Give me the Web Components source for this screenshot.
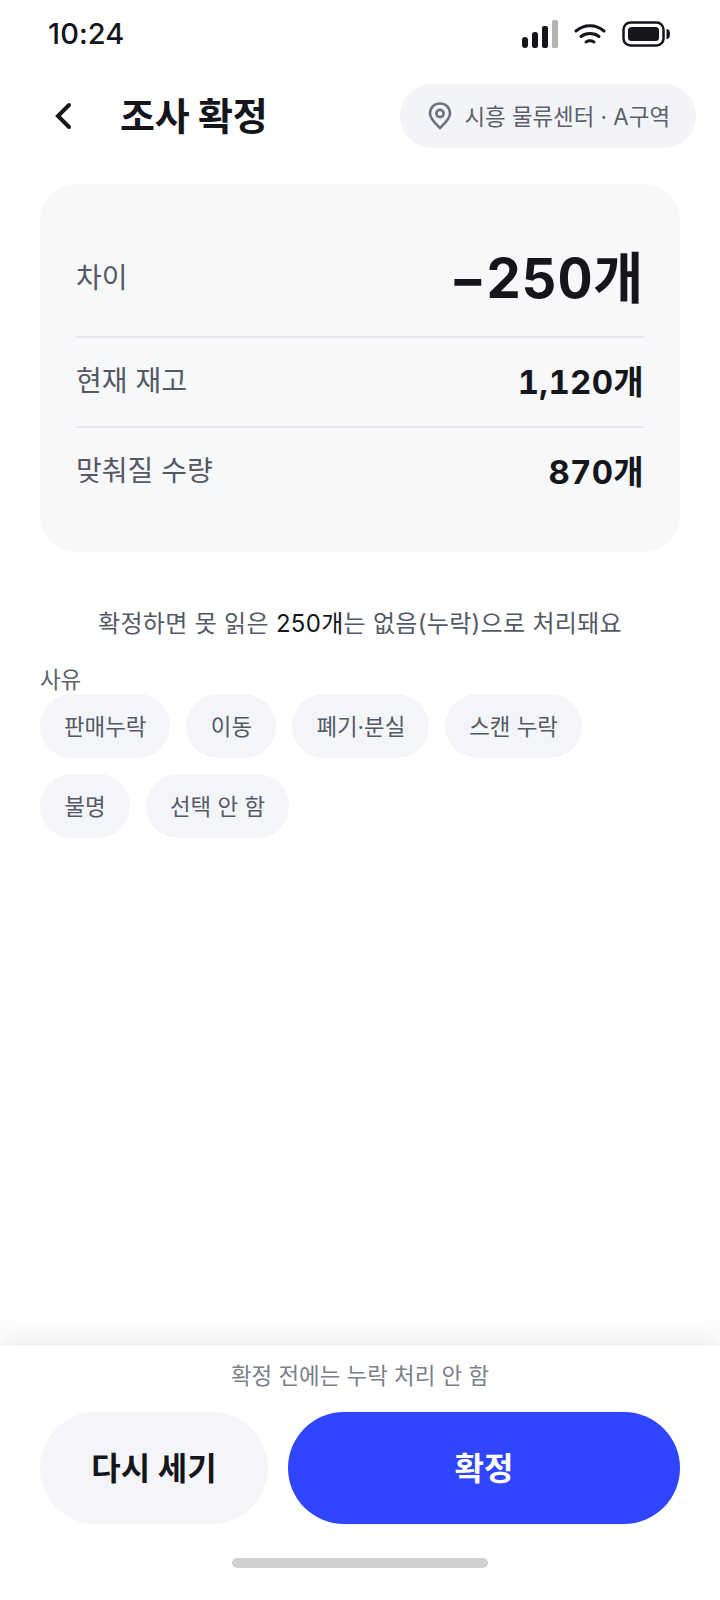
<!DOCTYPE html>
<html lang="ko">
<head>
<meta charset="utf-8">
<title>조사 확정</title>
<style>
  html, body { margin: 0; background: #fff; }
  body { font-family: Inter, "Noto Sans CJK KR", sans-serif; color: #14161c; }
</style>
</head>
<body>
<confirm-screen>
  <status-bar></status-bar>
  <top-bar title="조사 확정" place="시흥 물류센터 · A구역"></top-bar>
  <summary-card>
    <summary-row label="차이" value="−250개" big></summary-row>
    <summary-row label="현재 재고" value="1,120개"></summary-row>
    <summary-row label="맞춰질 수량" value="870개" last></summary-row>
  </summary-card>
  <p-note>확정하면 못 읽은 <b>250개</b>는 없음(누락)으로 처리돼요</p-note>
  <reason-chips label="사유">
    <reason-chip>판매누락</reason-chip>
    <reason-chip>이동</reason-chip>
    <reason-chip>폐기·분실</reason-chip>
    <reason-chip>스캔 누락</reason-chip>
    <reason-chip>불명</reason-chip>
    <reason-chip>선택 안 함</reason-chip>
  </reason-chips>
  <action-footer slot="footer" hint="확정 전에는 누락 처리 안 함" secondary="다시 세기" primary="확정"></action-footer>
</confirm-screen>

<script>
class ConfirmScreen extends HTMLElement {
  constructor() {
    super();
    this.attachShadow({ mode: "open" });
    this.shadowRoot.innerHTML = `
      <style>
        :host { display: flex; flex-direction: column; width: 720px; height: 1600px; overflow: hidden; background: #fff; }
        .body { flex: 1; display: flex; flex-direction: column; min-height: 0; }
      </style>
      <div class="body"><slot></slot></div>
      <slot name="footer"></slot>
    `;
  }
}

class StatusBar extends HTMLElement {
  constructor() {
    super();
    this.attachShadow({ mode: "open" });
    this.shadowRoot.innerHTML = `
      <style>
        :host { display: flex; align-items: center; justify-content: space-between; height: 68px; padding: 0 50px 0 48px; box-sizing: border-box; }
        .time { font-size: 29px; font-weight: 500; letter-spacing: .1px; color: #14161c; padding-bottom: 2px; }
        .icons { display: flex; align-items: center; gap: 16px; }
        svg { display: block; }
      </style>
      <span class="time">10:24</span>
      <div class="icons">
        <svg width="36" height="28" viewBox="0 0 36 28">
          <rect x="0" y="17" width="6" height="11" rx="3" fill="#14161c"/>
          <rect x="10" y="12" width="6" height="16" rx="2.5" fill="#14161c"/>
          <rect x="20" y="6" width="6" height="22" rx="2" fill="#14161c"/>
          <rect x="30" y="0" width="6" height="28" rx="1.5" fill="#b4b4b6"/>
        </svg>
        <svg width="32" height="22" viewBox="0 0 32 22" fill="none" stroke="#14161c" stroke-width="3" stroke-linecap="round">
          <path d="M2 8 C10 1 22 1 30 8"/>
          <path d="M7 13.5 C12 9.5 20 9.5 25 13.5"/>
          <path d="M12 19 C14.5 17.5 17.500 17.500 20 19"/>
        </svg>
        <svg width="48" height="26" viewBox="0 0 48 26">
          <rect x="1.500" y="1.500" width="40" height="23" rx="7" fill="none" stroke="#14161c" stroke-width="2.500"/>
          <rect x="6" y="6" width="31" height="14" rx="3.500" fill="#14161c"/>
          <path d="M44.500 8 C47 8 48 10 48 13 C48 16 47 18 44.500 18 Z" fill="#14161c"/>
        </svg>
      </div>
    `;
  }
}

class TopBar extends HTMLElement {
  constructor() {
    super();
    this.attachShadow({ mode: "open" });
  }

  connectedCallback() {
    const title = this.getAttribute("title");
    const place = this.getAttribute("place");
    this.shadowRoot.innerHTML = `
      <style>
        :host { display: flex; align-items: center; height: 64px; margin-top: 16px; padding: 0 24px 0 40px; }
        .back { width: 48px; height: 48px; display: flex; align-items: center; justify-content: center; margin-right: 32px; padding-bottom: 1px; }
        h1 { flex: 1; margin: 0 0 6px; font-size: 38px; font-weight: 700; letter-spacing: -.3px; color: #14161c; }
        .place { display: flex; align-items: center; gap: 12px; height: 64px; padding: 0 26px 0 28px; border-radius: 32px; background: #f3f4f8; color: #5b5f6b; font-size: 22.4px; }
        .place span { padding-bottom: 3px; }
        svg { display: block; }
      </style>
      <div class="back">
        <svg width="20" height="28" viewBox="0 0 20 28" fill="none" stroke="#14161c" stroke-width="4" stroke-linecap="round" stroke-linejoin="miter">
          <path d="M15 3 L4 14 L15 25"/>
        </svg>
      </div>
      <h1>${title}</h1>
      <div class="place">
        <svg width="24" height="28" viewBox="0 0 24 28" fill="none" stroke="#6f7380" stroke-width="2.600">
          <path d="M12 26 C8 22 2 17 2 11.500 C2 5.500 6.500 1.500 12 1.500 C17.500 1.500 22 5.500 22 11.500 C22 17 16 22 12 26 Z" stroke-linejoin="round"/>
          <circle cx="12" cy="11.500" r="3.600"/>
        </svg>
        <span>${place}</span>
      </div>
    `;
  }
}

class SummaryCard extends HTMLElement {
  constructor() {
    super();
    this.attachShadow({ mode: "open" });
    this.shadowRoot.innerHTML = `
      <style>
        :host { display: flex; flex-direction: column; height: 368px; margin: 36px 40px 0; padding: 36px 36px; box-sizing: border-box; border-radius: 36px; background: #f7f8fa; }
        ::slotted(summary-row:not(:last-child)) { border-bottom: 2px solid #e5e6ec; }
      </style>
      <slot></slot>
    `;
  }
}

class SummaryRow extends HTMLElement {
  constructor() {
    super();
    this.attachShadow({ mode: "open" });
  }

  connectedCallback() {
    const big = this.hasAttribute("big");
    const height = big ? 118 : this.hasAttribute("last") ? 88 : 90;
    this.shadowRoot.innerHTML = `
      <style>
        :host { display: flex; flex: none; align-items: center; justify-content: space-between; box-sizing: border-box; height: ${height}px; }
        .label { font-size: 28px; color: #555965; padding-bottom: ${big ? 4 : 6}px; }
        .value { font-size: ${big ? 54.4 : 33}px; font-weight: 700; color: #14161c; font-variant-numeric: tabular-nums; letter-spacing: ${big ? .6 : .3}px; padding-bottom: ${big ? 8 : 5}px; }
      </style>
      <span class="label">${this.getAttribute("label")}</span>
      <span class="value">${this.getAttribute("value")}</span>
    `;
  }
}

class PNote extends HTMLElement {
  constructor() {
    super();
    this.attachShadow({ mode: "open" });
    this.shadowRoot.innerHTML = `
      <style>
        :host { display: block; margin-top: 55px; text-align: center; font-size: 24px; letter-spacing: .3px; line-height: 34px; color: #555965; }
        ::slotted(b) { font-weight: 400; color: #14161c; }
      </style>
      <slot></slot>
    `;
  }
}

class ReasonChips extends HTMLElement {
  constructor() {
    super();
    this.attachShadow({ mode: "open" });
  }

  connectedCallback() {
    this.shadowRoot.innerHTML = `
      <style>
        :host { display: block; margin: 24px 40px 0; }
        .label { font-size: 22.4px; line-height: 29px; color: #5b5f6b; }
        .chips { display: flex; flex-wrap: wrap; gap: 16px; }
      </style>
      <div class="label">${this.getAttribute("label")}</div>
      <div class="chips"><slot></slot></div>
    `;
  }
}

class ReasonChip extends HTMLElement {
  constructor() {
    super();
    this.attachShadow({ mode: "open" });
    this.shadowRoot.innerHTML = `
      <style>
        :host { display: flex; align-items: center; justify-content: center; box-sizing: border-box; min-width: 90px; height: 64px; padding: 0 24px 2px; border-radius: 32px; background: #f4f5f9; font-size: 22.4px; color: #555965; }
      </style>
      <slot></slot>
    `;
  }
}

class ActionFooter extends HTMLElement {
  constructor() {
    super();
    this.attachShadow({ mode: "open" });
  }

  connectedCallback() {
    this.shadowRoot.innerHTML = `
      <style>
        :host { display: flex; flex-direction: column; height: 254px; box-sizing: border-box; background: #fff; box-shadow: 0 -10px 28px rgba(0, 0, 0, .08); }
        .hint { margin-top: 13px; height: 34px; line-height: 34px; text-align: center; font-size: 22.4px; color: #7b7f8b; }
        .actions { display: flex; gap: 20px; margin-top: 19px; padding: 0 40px; }
        button { height: 112px; padding: 0 0 5px; border: 0; border-radius: 56px; font: inherit; font-size: 32px; font-weight: 700; }
        .secondary { width: 228px; background: #f4f5f9; color: #14161c; }
        .primary { flex: 1; background: #3045ff; color: #fff; }
        .home { width: 256px; height: 10px; margin: 34px auto 0; border-radius: 5px; background: #d0d0d0; }
      </style>
      <div class="hint">${this.getAttribute("hint")}</div>
      <div class="actions">
        <button class="secondary">${this.getAttribute("secondary")}</button>
        <button class="primary">${this.getAttribute("primary")}</button>
      </div>
      <div class="home"></div>
    `;
  }
}

customElements.define("confirm-screen", ConfirmScreen);
customElements.define("status-bar", StatusBar);
customElements.define("top-bar", TopBar);
customElements.define("summary-card", SummaryCard);
customElements.define("summary-row", SummaryRow);
customElements.define("p-note", PNote);
customElements.define("reason-chips", ReasonChips);
customElements.define("reason-chip", ReasonChip);
customElements.define("action-footer", ActionFooter);
</script>
</body>
</html>
